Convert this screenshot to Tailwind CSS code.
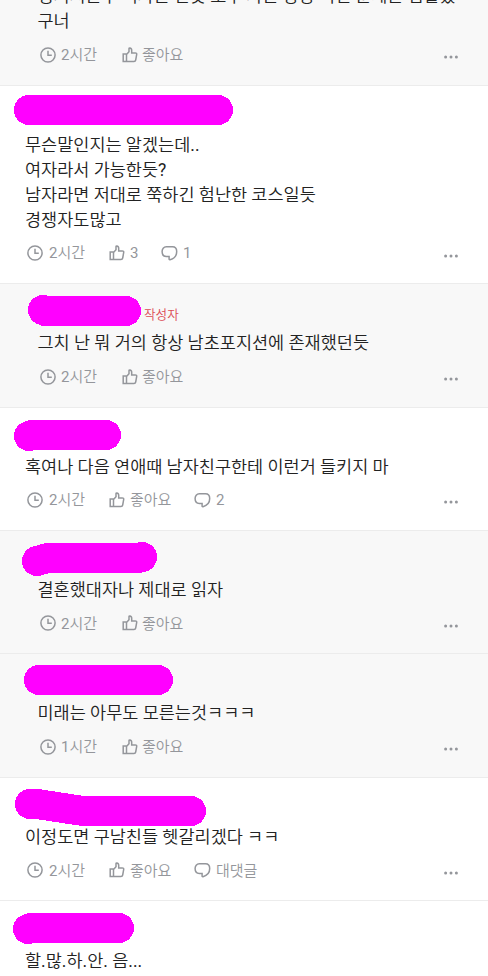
<!DOCTYPE html>
<html lang="ko">
<head>
<meta charset="utf-8">
<title>댓글</title>
<script src="https://cdn.jsdelivr.net/npm/@tailwindcss/browser@4"></script>
</head>
<body class="w-[488px] h-[976px] overflow-hidden bg-white font-[Roboto,'Noto_Sans_CJK_KR',sans-serif] font-[350] text-[17.5px] leading-[25px] text-[#222] [&_b]:font-normal">
<svg class="hidden">
  <symbol id="clock" viewBox="0 0 16 16"><circle cx="8" cy="8" r="7.1"/><path d="M8 3.8V8.3H11.8"/></symbol>
  <symbol id="like" viewBox="0 0 16 16"><path d="M1.2 7H4.5V14.5H1.2ZM4.5 7.6L7 4.7V1.7Q7 1 7.8 1Q9.7 1.2 9.7 3.4V5.9H13.2Q14.9 5.9 14.7 7.5L13.7 13Q13.4 14.5 12 14.5H4.5"/></symbol>
  <symbol id="talk" viewBox="0 0 17 16"><path d="M8.1 11.5H5.3C2.6 11.5 1.1 9.3 1.1 6.6S2.7 1.8 5.3 1.8H11.5C14.1 1.8 15.7 3.9 15.7 6.6C15.7 10.4 13 13.7 9 14.7Q7.9 14.9 8.1 13.8Z"/></symbol>
  <symbol id="more" viewBox="0 0 14 4"><circle cx="1.6" cy="2" r="1.5"/><circle cx="7" cy="2" r="1.5"/><circle cx="12.4" cy="2" r="1.5"/></symbol>
</svg>
<main class="flex flex-col">
  <article class="h-[85px] bg-[#f8f8f8] pl-[37.5px] pr-[30px] overflow-hidden">
    <p class="-mt-[16px] whitespace-nowrap tracking-[-0.08px]">정거지는구 여자는 만못 모두 자는 항상 이런 문제는 겁같았<br>구너</p>
    <div class="mt-[9px] ml-[2.5px] h-6 flex items-center text-[15px] leading-6 text-[#94969b]">
      <svg class="size-4 mr-[5px] fill-none stroke-current stroke-[1.5]"><use href="#clock"/></svg><span class="w-[61px]"><b>2</b>시간</span>
      <svg class="size-4 mr-[4px] fill-none stroke-current stroke-[1.5]"><use href="#like"/></svg><span>좋아요</span>
      <svg class="w-[14px] h-1 ml-auto mt-1 fill-current"><use href="#more"/></svg>
    </div>
  </article>
  <article class="relative h-[198px] border-t border-[#ececec] pt-[47px] pl-[25px] pr-[30px]">
    <svg class="absolute left-0 top-0 w-[300px] h-[46px] fill-none stroke-[#f0f] stroke-[30]" stroke-linecap="round" stroke-linejoin="round" shape-rendering="crispEdges"><path d="M29 24H218"/></svg>
    <p>무슨말인지는 알겠는데<b>..</b><br>여자라서 가능한듯<b>?</b><br>남자라면 저대로 쭉하긴 험난한 코스일듯<br>경쟁자도많고</p>
    <div class="mt-[8px] ml-[2px] h-6 flex items-center text-[15px] leading-6 text-[#94969b]">
      <svg class="size-4 mr-[6px] fill-none stroke-current stroke-[1.5]"><use href="#clock"/></svg><span class="w-[60px]"><b>2</b>시간</span>
      <svg class="size-4 mr-[5px] fill-none stroke-current stroke-[1.5]"><use href="#like"/></svg><span class="w-[31px]"><b>3</b></span>
      <svg class="w-[17px] h-4 mr-[5px] fill-none stroke-current stroke-[1.5]"><use href="#talk"/></svg><span><b>1</b></span>
      <svg class="w-[14px] h-1 ml-auto mt-[6px] fill-current"><use href="#more"/></svg>
    </div>
  </article>
  <article class="relative h-[124px] border-t border-[#ececec] bg-[#f8f8f8] pt-[18px] pl-[37.5px] pr-[30px]">
    <svg class="absolute left-0 top-0 w-[300px] h-[46px] fill-none stroke-[#f0f] stroke-[30]" stroke-linecap="round" stroke-linejoin="round" shape-rendering="crispEdges"><path d="M43 26L45 27H126"/></svg>
    <div class="h-[29px] pl-[106.5px] text-[12.6px] text-[#dc4b55]">작성자</div>
    <p>그치 난 뭐 거의 항상 남초포지션에 존재했던듯</p>
    <div class="mt-[9px] ml-[2.5px] h-6 flex items-center text-[15px] leading-6 text-[#94969b]">
      <svg class="size-4 mr-[5px] fill-none stroke-current stroke-[1.5]"><use href="#clock"/></svg><span class="w-[61px]"><b>2</b>시간</span>
      <svg class="size-4 mr-[4px] fill-none stroke-current stroke-[1.5]"><use href="#like"/></svg><span>좋아요</span>
      <svg class="w-[14px] h-1 ml-auto mt-1 fill-current"><use href="#more"/></svg>
    </div>
  </article>
  <article class="relative h-[123px] border-t border-[#ececec] pt-[47px] pl-[25px] pr-[30px]">
    <svg class="absolute left-0 top-0 w-[300px] h-[46px] fill-none stroke-[#f0f] stroke-[30]" stroke-linecap="round" stroke-linejoin="round" shape-rendering="crispEdges"><path d="M29 28L32 27H106"/></svg>
    <p>혹여나 다음 연애때 남자친구한테 이런거 들키지 마</p>
    <div class="mt-[8px] ml-[2px] h-6 flex items-center text-[15px] leading-6 text-[#94969b]">
      <svg class="size-4 mr-[6px] fill-none stroke-current stroke-[1.5]"><use href="#clock"/></svg><span class="w-[60px]"><b>2</b>시간</span>
      <svg class="size-4 mr-[5px] fill-none stroke-current stroke-[1.5]"><use href="#like"/></svg><span class="w-[64px]">좋아요</span>
      <svg class="w-[17px] h-4 mr-[5px] fill-none stroke-current stroke-[1.5]"><use href="#talk"/></svg><span><b>2</b></span>
      <svg class="w-[14px] h-1 ml-auto mt-1 fill-current"><use href="#more"/></svg>
    </div>
  </article>
  <article class="relative h-[123px] border-t border-[#ececec] bg-[#f8f8f8] pt-[47px] pl-[37.5px] pr-[30px]">
    <svg class="absolute left-0 top-0 w-[300px] h-[46px] fill-none stroke-[#f0f] stroke-[30]" stroke-linecap="round" stroke-linejoin="round" shape-rendering="crispEdges"><path d="M37 30L48 27H138L142 26"/></svg>
    <p>결혼했대자나 제대로 읽자</p>
    <div class="mt-[8px] ml-[2.5px] h-6 flex items-center text-[15px] leading-6 text-[#94969b] [&>span]:pt-0.5">
      <svg class="size-4 mr-[5px] fill-none stroke-current stroke-[1.5]"><use href="#clock"/></svg><span class="w-[61px]"><b>2</b>시간</span>
      <svg class="size-4 mr-[4px] fill-none stroke-current stroke-[1.5]"><use href="#like"/></svg><span>좋아요</span>
      <svg class="w-[14px] h-1 ml-auto mt-[6px] fill-current"><use href="#more"/></svg>
    </div>
  </article>
  <article class="relative h-[124px] border-t border-[#ececec] bg-[#f8f8f8] pt-[47px] pl-[37.5px] pr-[30px]">
    <svg class="absolute left-0 top-0 w-[300px] h-[46px] fill-none stroke-[#f0f] stroke-[30]" stroke-linecap="round" stroke-linejoin="round" shape-rendering="crispEdges"><path d="M39 26H158"/></svg>
    <p>미래는 아무도 모른는것ㅋㅋㅋ</p>
    <div class="mt-[9px] ml-[2.5px] h-6 flex items-center text-[15px] leading-6 text-[#94969b]">
      <svg class="size-4 mr-[5px] fill-none stroke-current stroke-[1.5]"><use href="#clock"/></svg><span class="w-[61px]"><b>1</b>시간</span>
      <svg class="size-4 mr-[4px] fill-none stroke-current stroke-[1.5]"><use href="#like"/></svg><span>좋아요</span>
      <svg class="w-[14px] h-1 ml-auto mt-1 fill-current"><use href="#more"/></svg>
    </div>
  </article>
  <article class="relative h-[123px] border-t border-[#ececec] pt-[47px] pl-[25px] pr-[30px]">
    <svg class="absolute left-0 top-0 w-[300px] h-[49px] fill-none stroke-[#f0f] stroke-[30]" stroke-linecap="round" stroke-linejoin="round" shape-rendering="crispEdges"><path d="M30 26L37 26L83 33H191"/></svg>
    <p class="relative">이정도면 구남친들 헷갈리겠다 ㅋㅋ</p>
    <div class="mt-[8px] ml-[2px] h-6 flex items-center text-[15px] leading-6 text-[#94969b] [&>span]:pt-0.5">
      <svg class="size-4 mr-[6px] fill-none stroke-current stroke-[1.5]"><use href="#clock"/></svg><span class="w-[60px]"><b>2</b>시간</span>
      <svg class="size-4 mr-[5px] fill-none stroke-current stroke-[1.5]"><use href="#like"/></svg><span class="w-[64px]">좋아요</span>
      <svg class="w-[17px] h-4 mr-[5px] fill-none stroke-current stroke-[1.5]"><use href="#talk"/></svg><span>대댓글</span>
      <svg class="w-[14px] h-1 ml-auto mt-[6px] fill-current"><use href="#more"/></svg>
    </div>
  </article>
  <article class="relative h-[76px] border-t border-[#ececec] pt-[48px] pl-[25px]">
    <svg class="absolute left-0 top-0 w-[300px] h-[46px] fill-none stroke-[#f0f] stroke-[30]" stroke-linecap="round" stroke-linejoin="round" shape-rendering="crispEdges"><path d="M28 28L31 27H119"/></svg>
    <p>할<b>.</b>많<b>.</b>하<b>.</b>안<b>.</b> 음<b>...</b></p>
  </article>
</main>
</body>
</html>
